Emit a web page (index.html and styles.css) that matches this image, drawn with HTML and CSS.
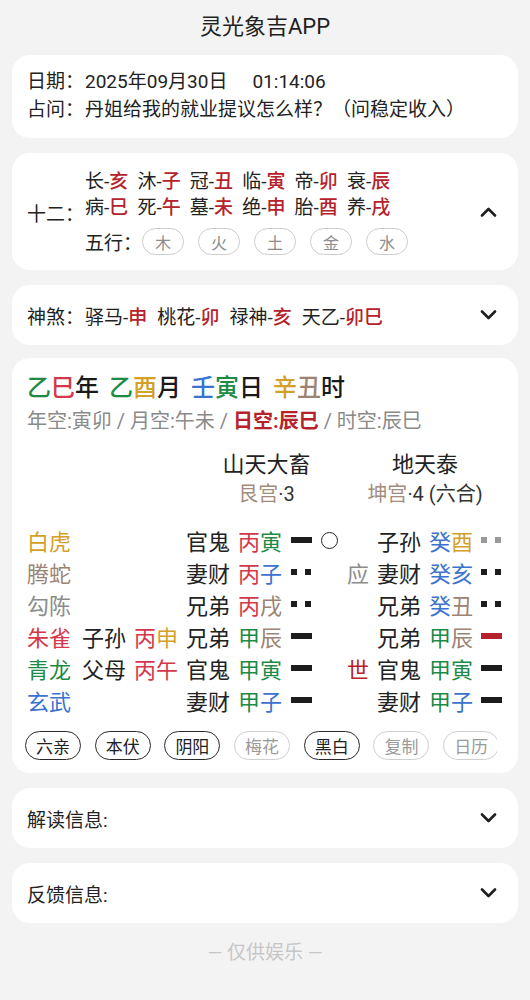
FILE: index.html
```html
<!DOCTYPE html>
<html lang="zh-CN">
<head>
<meta charset="utf-8">
<title>灵光象吉APP</title>
<link rel="stylesheet" href="styles.css">
</head>
<body>
<header class="app-title">灵光象吉APP</header>
<main class="cards">
  <section class="card info">
    <div class="info-line"><span class="label">日期：</span><span>2025年09月30日<span class="time">01:14:06</span></span></div>
    <div class="info-line"><span class="label">占问：</span><span>丹姐给我的就业提议怎么样？（问稳定收入）</span></div>
  </section>

  <section class="card fold twelve">
    <span class="label">十二：</span>
    <div class="fold-body">
      <div class="stages">
        <span>长-<b>亥</b></span><span>沐-<b>子</b></span><span>冠-<b>丑</b></span><span>临-<b>寅</b></span><span>帝-<b>卯</b></span><span>衰-<b>辰</b></span>
      </div>
      <div class="stages">
        <span>病-<b>巳</b></span><span>死-<b>午</b></span><span>墓-<b>未</b></span><span>绝-<b>申</b></span><span>胎-<b>酉</b></span><span>养-<b>戌</b></span>
      </div>
      <div class="wuxing">
        <span class="wx-label">五行：</span>
        <span class="pills">
          <span class="pill">木</span><span class="pill">火</span><span class="pill">土</span><span class="pill">金</span><span class="pill">水</span>
        </span>
      </div>
    </div>
    <svg class="chev" viewBox="0 0 17 10" width="17" height="10"><polyline points="2,8.5 8.5,2 15,8.5"/></svg>
  </section>

  <section class="card fold row-card">
    <span class="label">神煞：</span>
    <div class="shensha">
      <span>驿马-<b>申</b></span><span>桃花-<b>卯</b></span><span>禄神-<b>亥</b></span><span>天乙-<b>卯巳</b></span>
    </div>
    <svg class="chev" viewBox="0 0 17 10" width="17" height="10"><polyline points="2,1.5 8.5,8 15,1.5"/></svg>
  </section>

  <section class="card gua">
    <div class="pillars">
      <span><i class="c-green">乙</i><i class="c-fire">巳</i>年</span>
      <span><i class="c-green">乙</i><i class="c-gold">酉</i>月</span>
      <span><i class="c-blue">壬</i><i class="c-green">寅</i>日</span>
      <span><i class="c-gold">辛</i><i class="c-brown">丑</i>时</span>
    </div>
    <div class="kong">年空:寅卯 / 月空:午未 / <b>日空:辰巳</b> / 时空:辰巳</div>

    <div class="hex-head">
      <div class="gname main">山天大畜</div>
      <div class="gname bian">地天泰</div>
      <div class="gpal main"><span class="pal">艮宫</span>·3</div>
      <div class="gpal bian"><span class="pal">坤宫</span>·4 (六合)</div>
    </div>

    <div class="hex-body">
      <span class="c-gold">白虎</span><span></span><span></span>
      <span>官鬼</span><span><i class="c-fire">丙</i><i class="c-green">寅</i></span><span><i class="yang"></i></span><span><i class="dong"></i></span>
      <span></span><span>子孙</span><span><i class="c-blue">癸</i><i class="c-gold">酉</i></span><span><i class="yin gray"></i></span>

      <span class="c-brown">腾蛇</span><span></span><span></span>
      <span>妻财</span><span><i class="c-fire">丙</i><i class="c-blue">子</i></span><span><i class="yin"></i></span><span></span>
      <span class="c-gray">应</span><span>妻财</span><span><i class="c-blue">癸</i><i class="c-blue">亥</i></span><span><i class="yin"></i></span>

      <span class="c-gray">勾陈</span><span></span><span></span>
      <span>兄弟</span><span><i class="c-fire">丙</i><i class="c-brown">戌</i></span><span><i class="yin"></i></span><span></span>
      <span></span><span>兄弟</span><span><i class="c-blue">癸</i><i class="c-brown">丑</i></span><span><i class="yin"></i></span>

      <span class="c-fire">朱雀</span><span>子孙</span><span><i class="c-fire">丙</i><i class="c-gold">申</i></span>
      <span>兄弟</span><span><i class="c-green">甲</i><i class="c-brown">辰</i></span><span><i class="yang"></i></span><span></span>
      <span></span><span>兄弟</span><span><i class="c-green">甲</i><i class="c-brown">辰</i></span><span><i class="yang red"></i></span>

      <span class="c-green">青龙</span><span>父母</span><span><i class="c-fire">丙</i><i class="c-fire">午</i></span>
      <span>官鬼</span><span><i class="c-green">甲</i><i class="c-green">寅</i></span><span><i class="yang"></i></span><span></span>
      <span class="c-red">世</span><span>官鬼</span><span><i class="c-green">甲</i><i class="c-green">寅</i></span><span><i class="yang"></i></span>

      <span class="c-blue">玄武</span><span></span><span></span>
      <span>妻财</span><span><i class="c-green">甲</i><i class="c-blue">子</i></span><span><i class="yang"></i></span><span></span>
      <span></span><span>妻财</span><span><i class="c-green">甲</i><i class="c-blue">子</i></span><span><i class="yang"></i></span>
    </div>

    <div class="btns">
      <span class="btn on">六亲</span>
      <span class="btn on">本伏</span>
      <span class="btn on">阴阳</span>
      <span class="btn">梅花</span>
      <span class="btn on">黑白</span>
      <span class="btn">复制</span>
      <span class="btn">日历</span>
    </div>
  </section>

  <section class="card fold row-card">
    <span class="plain">解读信息:</span>
    <svg class="chev" viewBox="0 0 17 10" width="17" height="10"><polyline points="2,1.5 8.5,8 15,1.5"/></svg>
  </section>

  <section class="card fold row-card">
    <span class="plain">反馈信息:</span>
    <svg class="chev" viewBox="0 0 17 10" width="17" height="10"><polyline points="2,1.5 8.5,8 15,1.5"/></svg>
  </section>
</main>
<footer class="foot">— 仅供娱乐 —</footer>
</body>
</html>
```

FILE: styles.css
```css
* { box-sizing: border-box; }

html, body {
  margin: 0;
  padding: 0;
  background: #f3f3f3;
}

body {
  font-family: Roboto, "Noto Sans CJK SC", sans-serif;
  color: #222;
  font-size: 19px;
}

i, b { font-style: normal; }

.app-title {
  text-align: center;
  font-size: 22px;
  line-height: 30px;
  padding-top: 12px;
  margin-bottom: 13px;
  color: #1f1f1f;
}

.cards {
  display: flex;
  flex-direction: column;
  gap: 15px;
  padding: 0 12px;
}

.card {
  background: #fff;
  border-radius: 18px;
}

/* info card */
.info {
  padding: 13px 15px 14px;
}
.info-line {
  display: flex;
  line-height: 28px;
  white-space: nowrap;
}
.label {
  flex: 0 0 58px;
  white-space: nowrap;
}
.time { margin-left: 25px; }

/* foldable cards */
.fold {
  display: flex;
  align-items: center;
  padding: 0 21px 0 15px;
}
.fold .chev {
  margin-left: auto;
  flex: 0 0 auto;
  fill: none;
  stroke: #1f1f1f;
  stroke-width: 2.6;
  stroke-linecap: round;
  stroke-linejoin: round;
}

.twelve {
  padding-top: 16px;
  padding-bottom: 15px;
}
.fold-body {
  display: flex;
  flex-direction: column;
}
.stages {
  display: grid;
  grid-template-columns: repeat(6, 52.4px);
  line-height: 26px;
  white-space: nowrap;
}
.stages b, .shensha b {
  color: #b5222b;
  font-weight: 500;
}
.wuxing {
  display: flex;
  align-items: center;
  margin-top: 7px;
}
.wx-label {
  flex: 0 0 56px;
  white-space: nowrap;
}
.pills {
  display: flex;
  gap: 14px;
}
.pill {
  width: 42px;
  height: 27px;
  border: 1px solid #cdcdcd;
  border-radius: 14px;
  color: #8c8c8c;
  font-size: 16px;
  display: flex;
  align-items: center;
  justify-content: center;
}

.row-card {
  height: 60px;
}
.shensha {
  display: flex;
  gap: 10px;
  white-space: nowrap;
}

/* main gua card */
.gua {
  padding: 14px 15px 13px;
  margin-top: -2px;
}
.pillars {
  display: flex;
  gap: 10px;
  font-size: 24px;
  line-height: 32px;
  font-weight: 500;
  color: #1a1a1a;
}
.kong {
  margin-top: 3px;
  font-size: 20px;
  line-height: 28px;
  color: #8a8a8a;
  white-space: nowrap;
}
.kong b {
  color: #b5222b;
  font-weight: 700;
}

.c-green { color: #1d8a46; }
.c-fire { color: #d4384a; }
.c-red { color: #b5222b; }
.c-gold { color: #d3a02a; }
.c-blue { color: #3a72d0; }
.c-brown { color: #9c8372; }
.c-gray { color: #8c8c8c; }

.hex-head,
.hex-body {
  display: grid;
  grid-template-columns: 55px 52px 52px 52px 52px 28px 29px 30px 52px 52px 22px;
}
.hex-head {
  margin-top: 15px;
  grid-template-rows: 30px 28px;
  text-align: center;
  white-space: nowrap;
}
.gname {
  font-size: 22px;
  line-height: 30px;
}
.gpal {
  font-size: 20px;
  line-height: 28px;
  color: #333;
}
.gpal .pal { color: #a48c7c; }
.main { grid-column: 4 / 8; }
.bian { grid-column: 8 / 12; }

.hex-body {
  margin-top: 16px;
  grid-auto-rows: 32px;
  font-size: 22px;
}
.hex-body > span {
  display: flex;
  align-items: center;
  white-space: nowrap;
}
.yang,
.yin {
  display: block;
  width: 21px;
  height: 6px;
  margin-left: 1px;
}
.yang { background: #1c1c1c; }
.yang.red { background: #b5222b; }
.yin {
  width: 20px;
  background: linear-gradient(to right, #1c1c1c 0 6px, transparent 6px 14px, #1c1c1c 14px 20px);
}
.yin.gray {
  background: linear-gradient(to right, #9a9a9a 0 6px, transparent 6px 14px, #9a9a9a 14px 20px);
}
.hex-body > span:nth-child(11n) .yang,
.hex-body > span:nth-child(11n) .yin { margin-left: 0; }
.dong {
  display: block;
  width: 17px;
  height: 17px;
  margin-left: 3px;
  border: 1.5px solid #222;
  border-radius: 50%;
}

.btns {
  display: flex;
  gap: 13.7px;
  margin: 15px 6px 0 -2px;
  overflow: hidden;
}
.btn {
  flex: 0 0 56px;
  height: 29px;
  border-radius: 15px;
  border: 1px solid #cfcfcf;
  color: #9a9a9a;
  font-size: 17px;
  display: flex;
  align-items: center;
  justify-content: center;
}
.btn.on {
  border: 1.5px solid #2a2a2a;
  color: #222;
}

.plain { color: #222; }

.foot {
  text-align: center;
  margin-top: 15px;
  line-height: 30px;
  font-size: 19px;
  color: #c6c6c6;
}
```
